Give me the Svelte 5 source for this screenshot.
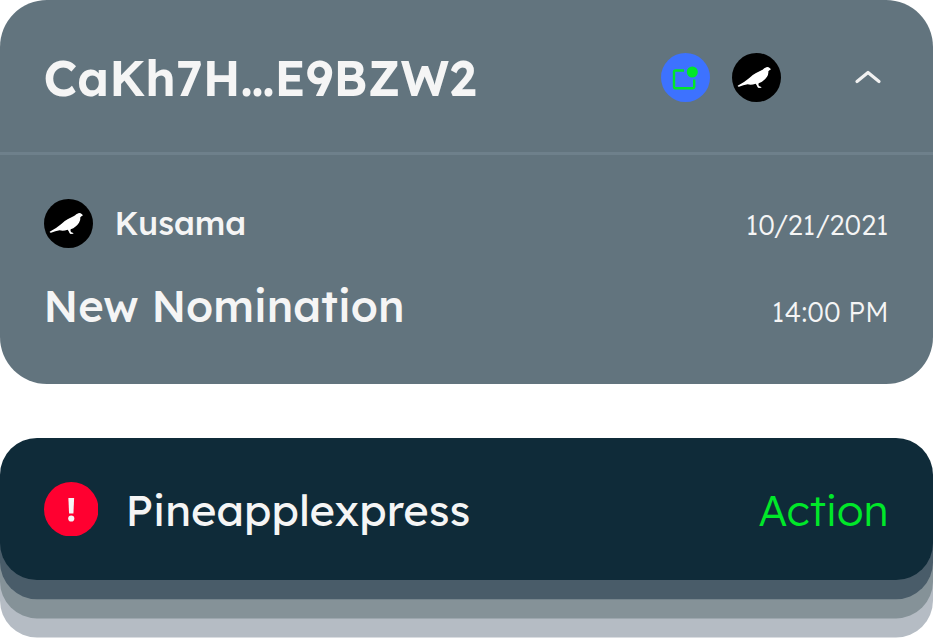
<script>
  const account = 'CaKh7H…E9BZW2';
  const event = { network: 'Kusama', date: '10/21/2021', title: 'New Nomination', time: '14:00 PM' };
</script>

{#snippet kusama()}
  <svg class="token" viewBox="0 0 147 147" aria-hidden="true">
    <circle cx="73.5" cy="73.5" r="73.5" fill="#000" />
    <path fill="#fff" d="M117 49L113 45Q108 41 103 43C99 44 95 48 90 51L72 60Q60 66 51 76L36 87L17 98Q17 101 21 101Q34 97 47 94Q58 97 71 92L75 98Q75 102 80 105L89 104Q87 101 82 100Q78 97 80 91Q97 84 105 71Q110 64 109 55Q112 52 117 49Z" />
  </svg>
{/snippet}

<main>
  <section class="card">
    <header>
      <h1><span>{account}</span></h1>
      <div class="icons">
        <svg class="token" viewBox="0 0 49 49" aria-hidden="true">
          <circle cx="24.5" cy="24.5" r="24.5" fill="#3d72ff" />
          <path d="M23 17.5H14.3Q13 17.5 13 18.8V34Q13 35.3 14.3 35.3H31.5Q33.2 35.3 33.2 33.6V26.5" fill="none" stroke="#00e829" stroke-width="2.4" />
          <circle cx="31.3" cy="19" r="5.5" fill="#00e829" />
        </svg>
        {@render kusama()}
        <svg class="chevron" viewBox="0 0 28 16" aria-hidden="true">
          <path d="M3 11.5L14 2.5L25 11.5" fill="none" stroke="#f1f1f1" stroke-width="3.2" stroke-linecap="round" stroke-linejoin="round" />
        </svg>
      </div>
    </header>
    <div class="row network">
      <div class="who">{@render kusama()}<span class="name">{event.network}</span></div>
      <span class="meta date">{event.date}</span>
    </div>
    <div class="row nomination">
      <h2>{event.title}</h2>
      <span class="meta time">{event.time}</span>
    </div>
  </section>

  <section class="alert">
    <svg class="warn" viewBox="0 0 55 55" aria-hidden="true">
      <circle cx="27.5" cy="27.5" r="27.5" fill="#ff0030" />
      <path d="M24.6 16.2H30.4L29.7 31.8H25.3Z" fill="#f5f5f5" />
      <circle cx="27.5" cy="36.8" r="3.1" fill="#f5f5f5" />
    </svg>
    <span class="label">Pineapplexpress</span>
    <span class="action">Action</span>
  </section>
</main>

<style>
  :global(body) { background: #fff; }
  main {
    width: 933px;
    height: 638px;
    overflow: hidden;
    font-family: Lexend, Inter, "Open Sans", sans-serif;
    color: #f5f5f5;
    white-space: nowrap;
  }
  h1, h2 { margin: 0; }
  svg { display: block; flex: none; }
  .card {
    box-sizing: border-box;
    height: 384px;
    border-radius: 47px;
    background: #62747e;
  }
  header {
    box-sizing: border-box;
    height: 155px;
    padding: 0 51.5px 0 43.5px;
    border-bottom: 3px solid #6e808b;
    display: flex;
    align-items: center;
    justify-content: space-between;
  }
  h1 { font-size: 49px; font-weight: 600; line-height: 60px; padding-top: 4px; }
  .icons { display: flex; align-items: center; gap: 22px; padding-top: 3px; }
  .token { width: 49px; height: 49px; }
  .chevron { width: 28px; height: 16px; margin-left: 50.5px; }
  .row {
    display: flex;
    align-items: center;
    justify-content: space-between;
    padding: 0 44.5px 0 43.5px;
  }
  .network { height: 136px; }
  .nomination { height: 60px; margin-top: -15px; }
  .who { display: flex; align-items: center; gap: 22px; }
  .name { font-size: 32.6px; font-weight: 500; padding-bottom: 1px; }
  h2 { font-size: 43.5px; font-weight: 500; padding-bottom: 2px; }
  .meta { font-size: 27.2px; font-weight: 300; }
  .date { padding-top: 3px; }
  .time { padding-top: 11px; }
  .alert {
    box-sizing: border-box;
    height: 142px;
    margin-top: 54px;
    padding: 0 44.5px 0 43.5px;
    border-radius: 37px;
    background: #0f2b39;
    box-shadow: 0 19.2px #495c69, 0 38.4px #859298, 0 57.5px #b5bcc4;
    display: flex;
    align-items: center;
  }
  .warn { width: 54.5px; height: 54.5px; margin-right: 27.5px; }
  .label { font-size: 43.5px; font-weight: 400; }
  .action { margin-left: auto; color: #00e829; font-size: 43.5px; font-weight: 300; }
</style>
